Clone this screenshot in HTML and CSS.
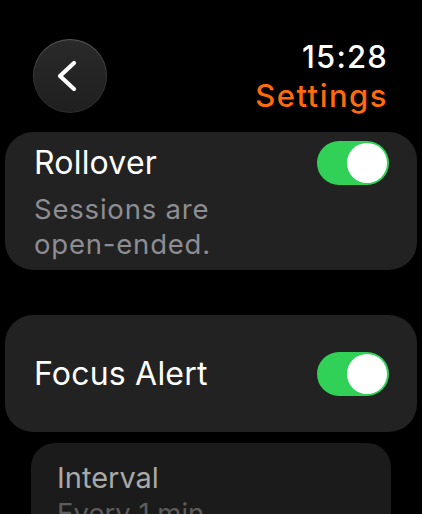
FILE: index.html
```html
<!DOCTYPE html>
<html lang="en">
<head>
    <meta charset="UTF-8">
    <meta name="viewport" content="width=device-width, initial-scale=1.0">
    <title>Settings</title>
    <link rel="stylesheet" href="styles.css">
</head>
<body>
    <div class="screen">
        <div class="header">
            <a href="##" class="button-back">
                <svg width="74" height="74" viewBox="0 0 74 74">
                    <path d="M41 24 L27 37 L41 50" fill="none" stroke="#fff" stroke-width="4.2" stroke-linecap="round" stroke-linejoin="round"/>
                </svg>
            </a>
            <div class="header-text">
                <span class="header-time">15:28</span>
                <span class="header-title">Settings</span>
            </div>
        </div>

        <!-- Rollover -->
        <div class="card card-rollover">
            <div class="card-row">
                <span class="card-name">Rollover</span>
                <span class="toggle on"><span class="toggle-knob"></span></span>
            </div>
            <div class="card-desc">Sessions are<br>open-ended.</div>
        </div>

        <!-- Focus Alert -->
        <div class="card card-alert">
            <div class="card-row">
                <span class="card-name">Focus Alert</span>
                <span class="toggle on"><span class="toggle-knob"></span></span>
            </div>
        </div>

        <div class="sub-card">
            <div class="sub-card-name">Interval</div>
            <div class="sub-card-value">Every 1 min</div>
        </div>
    </div>
</body>
</html>
```

FILE: styles.css
```css
*{
    padding: 0;
    margin: 0;
    box-sizing: border-box;
}

body{
    background-color: #000;
    color: #fff;
    font-family: Inter, "Noto Sans", sans-serif;
    overflow: hidden;
}

a{
    text-decoration: none;
    color: #fff;
}

.screen{
    width: 422px;
    height: 514px;
    overflow: hidden;
    padding: 0 5px;
}

/* ================== header ===================== */
.header{
    display: flex;
    justify-content: space-between;
    align-items: flex-start;
    padding: 37px 30px 0 28px;
    height: 132px;
}

.header .button-back{
    display: block;
    width: 74px;
    height: 74px;
    margin-top: 2px;
    border-radius: 50%;
    background: linear-gradient(#2a2a2a, #1f1f1f);
    box-shadow: inset 0 1px 1px rgba(255, 255, 255, 0.18), inset 0 0 0 1px rgba(255, 255, 255, 0.06);
}

.header .button-back svg{
    display: block;
}

.header .header-text{
    display: flex;
    flex-direction: column;
    align-items: flex-end;
    line-height: 39px;
    font-size: 31px;
    font-weight: 500;
}

.header .header-time{
    letter-spacing: 1.2px;
    margin-right: -1px;
}

.header .header-title{
    color: #ff6a0d;
    letter-spacing: 1.5px;
    margin-right: -1px;
}

/* ================== cards ===================== */
.card{
    background-color: #222;
    border-radius: 28px;
    padding: 9px 28px 8px 29px;
}

.card-alert{
    margin-top: 45px;
    padding-top: 37px;
    padding-bottom: 36px;
}

.card .card-row{
    display: flex;
    justify-content: space-between;
    align-items: center;
    height: 44px;
}

.card .card-name{
    font-size: 32px;
    line-height: 44px;
    letter-spacing: 0.2px;
}

.card .card-desc{
    margin-top: 7px;
    font-size: 27.5px;
    line-height: 35px;
    letter-spacing: 0.8px;
    color: #8d8d92;
}

.toggle{
    display: block;
    position: relative;
    width: 72px;
    height: 44px;
    border-radius: 22px;
    background-color: #3a3a3c;
}

.toggle.on{
    background-color: #31d158;
}

.toggle .toggle-knob{
    position: absolute;
    top: 2px;
    left: 2px;
    width: 40px;
    height: 40px;
    border-radius: 50%;
    background-color: #fff;
}

.toggle.on .toggle-knob{
    left: 30px;
}

.sub-card{
    margin: 11px 26px 0 26px;
    background-color: #1b1b1b;
    border-radius: 24px;
    padding: 17px 26px 20px 26px;
}

.sub-card .sub-card-name{
    font-size: 29px;
    line-height: 36px;
    color: #a9a9a9;
}

.sub-card .sub-card-value{
    font-size: 27.5px;
    line-height: 34px;
    color: #5c5c5c;
}
```
